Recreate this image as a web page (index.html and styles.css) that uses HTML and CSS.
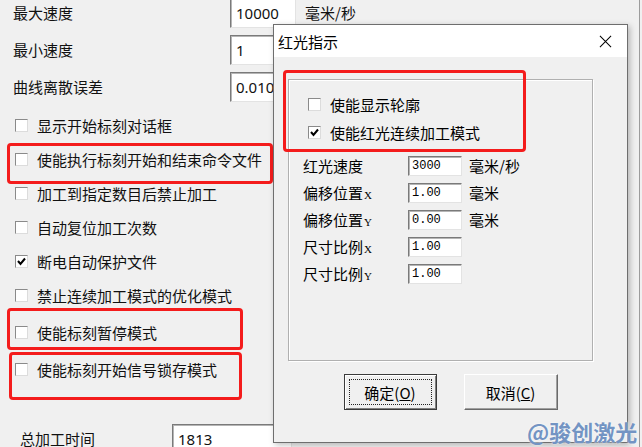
FILE: index.html
```html
<!DOCTYPE html>
<html lang="zh-CN">
<head>
<meta charset="UTF-8" />
<title>红光指示</title>
<link rel="stylesheet" href="styles.css">
</head>
<body>
<div class="screen">

  <!-- Background settings form -->
  <div class="form">
    <div class="field-row"><span class="label">最大速度</span><span class="input">10000</span><span class="unit">毫米/秒</span></div>
    <div class="field-row"><span class="label">最小速度</span><span class="input">1</span></div>
    <div class="field-row"><span class="label">曲线离散误差</span><span class="input">0.010</span></div>

    <div class="check-row spaced"><span class="box"></span><span>显示开始标刻对话框</span></div>
    <div class="check-row"><span class="box"></span><span>使能执行标刻开始和结束命令文件</span></div>
    <div class="check-row"><span class="box"></span><span>加工到指定数目后禁止加工</span></div>
    <div class="check-row"><span class="box"></span><span>自动复位加工次数</span></div>
    <div class="check-row"><span class="box checked"><svg viewBox="0 0 11 11"><polyline points="2,5 4.5,8 9,2.5" /></svg></span><span>断电自动保护文件</span></div>
    <div class="check-row"><span class="box"></span><span>禁止连续加工模式的优化模式</span></div>
    <div class="check-row spaced"><span class="box"></span><span>使能标刻暂停模式</span></div>
    <div class="check-row spaced"><span class="box"></span><span>使能标刻开始信号锁存模式</span></div>

    <div class="field-row total"><span class="label">总加工时间</span><span class="input wide">1813</span></div>
  </div>

  <!-- Red annotation boxes -->
  <div class="mark mark-a"></div>
  <div class="mark mark-b"></div>
  <div class="mark mark-c"></div>

  <!-- Dialog window -->
  <div class="dialog">
    <div class="title-bar">
      <span>红光指示</span>
      <svg class="close" viewBox="0 0 14 14"><path d="M1 1 L13 13 M13 1 L1 13" /></svg>
    </div>
    <div class="dialog-body">
      <div class="group">
        <div class="group-checks">
          <div class="dlg-check"><span class="box"></span><span>使能显示轮廓</span></div>
          <div class="dlg-check"><span class="box checked"><svg viewBox="0 0 11 11"><polyline points="2,5 4.5,8 9,2.5" /></svg></span><span>使能红光连续加工模式</span></div>
        </div>
        <div class="params">
          <div class="param"><span class="plabel">红光速度</span><span class="pinput">3000</span><span class="punit">毫米/秒</span></div>
          <div class="param"><span class="plabel">偏移位置<small>X</small></span><span class="pinput">1.00</span><span class="punit">毫米</span></div>
          <div class="param"><span class="plabel">偏移位置<small>Y</small></span><span class="pinput">0.00</span><span class="punit">毫米</span></div>
          <div class="param"><span class="plabel">尺寸比例<small>X</small></span><span class="pinput">1.00</span></div>
          <div class="param"><span class="plabel">尺寸比例<small>Y</small></span><span class="pinput">1.00</span></div>
        </div>
      </div>
      <div class="buttons">
        <button class="btn default">确定(<u>O</u>)</button>
        <button class="btn">取消(<u>C</u>)</button>
      </div>
    </div>
  </div>

  <div class="mark mark-d"></div>

  <div class="watermark">@骏创激光</div>
</div>
</body>
</html>
```

FILE: styles.css
```css
* {
  margin: 0; padding: 0; box-sizing: border-box;
}
body {
  background: #f0f0f0;
  font-family: "Noto Sans CJK SC", "Noto Sans", sans-serif;
  font-size: 15px;
  color: #111;
  overflow: hidden;
}
.screen {
  position: relative;
  width: 640px;
  height: 447px;
  border-right: 1px solid #9c9c9c;
  overflow: hidden;
}

/* Background form */
.form {
  margin-top: -6px;
}
.field-row {
  display: flex;
  align-items: center;
  height: 37px;
  padding-left: 13px;
}
.field-row .label {
  width: 217px;
}
.input {
  display: flex;
  align-items: center;
  width: 66px;
  height: 30px;
  padding-left: 5px;
  background: #fff;
  border: 1px solid;
  border-color: #7a7a7a #e3e3e3 #e3e3e3 #7a7a7a;
  box-shadow: inset 1px 1px 0 #b5b5b5;
  font-family: "Noto Sans", sans-serif;
  font-size: 15px;
}
.unit {
  margin-left: 9px;
}
.field-row.total {
  margin-top: 34px;
  padding-left: 20px;
}
.field-row.total .label {
  width: 152px;
}
.input.wide {
  width: 120px;
}

.check-row {
  display: flex;
  align-items: center;
  gap: 9px;
  height: 34px;
  padding-left: 15px;
}
.check-row.spaced {
  margin-top: 3px;
}

/* Checkbox */
.box {
  display: flex;
  align-items: center;
  justify-content: center;
  width: 13px;
  height: 13px;
  flex: none;
  background: #fff;
  border: 1px solid;
  border-color: #8a8a8a #dcdcdc #dcdcdc #8a8a8a;
}
.box svg {
  width: 11px;
  height: 11px;
}
.box polyline {
  fill: none;
  stroke: #000;
  stroke-width: 2;
}

/* Red annotations */
.mark {
  position: absolute;
  border: 3px solid #f41c1c;
  border-radius: 4px;
}
.mark-a { left: 7px; top: 143px; width: 266px; height: 41px; }
.mark-b { left: 7px; top: 308px; width: 236px; height: 42px; }
.mark-c { left: 9px; top: 352px; width: 233px; height: 48px; }
.mark-d { left: 283px; top: 70px; width: 243px; height: 82px; }

/* Dialog */
.dialog {
  position: absolute;
  left: 273px;
  top: 24px;
  width: 355px;
  height: 419px;
  background: #f0f0f0;
  border: 1px solid #6e6e6e;
  box-shadow: 2px 2px 6px rgba(0, 0, 0, 0.25);
  color: #000;
}
.title-bar {
  display: flex;
  align-items: center;
  justify-content: space-between;
  height: 32px;
  padding: 0 15px 0 4px;
  background: #fff;
}
.close {
  width: 13px;
  height: 13px;
}
.close path {
  stroke: #000;
  stroke-width: 1.1;
  fill: none;
}
.dialog-body {
  padding: 22px 0 0 14px;
}
.group {
  width: 305px;
  height: 282px;
  border: 1px solid #b0b0b0;
  box-shadow: inset 1px 1px 0 #fff, 1px 1px 0 #fff;
}
.group-checks {
  padding: 10px 0 0 19px;
}
.dlg-check {
  display: flex;
  align-items: center;
  gap: 9px;
  height: 28px;
}
.params {
  margin-top: 6px;
  padding-left: 14px;
}
.param {
  display: flex;
  align-items: center;
  height: 27px;
}
.plabel {
  width: 105px;
}
.plabel small {
  font-family: "Liberation Serif", serif;
  font-size: 11px;
  margin-left: 1px;
}
.pinput {
  display: flex;
  align-items: center;
  width: 54px;
  height: 20px;
  padding-left: 3px;
  background: #fff;
  border: 1px solid;
  border-color: #7a7a7a #e3e3e3 #e3e3e3 #7a7a7a;
  box-shadow: inset 1px 1px 0 #b5b5b5;
  font-family: "Liberation Mono", monospace;
  font-size: 12px;
}
.punit {
  margin-left: 7px;
}

.buttons {
  display: flex;
  justify-content: center;
  gap: 27px;
  margin-top: 13px;
  padding-right: 14px;
}
.btn {
  position: relative;
  width: 94px;
  height: 36px;
  background: #f0f0f0;
  font-family: "Noto Sans CJK SC", sans-serif;
  font-size: 15px;
  color: #000;
  border: 1px solid;
  border-color: #fff #6a6a6a #6a6a6a #fff;
  box-shadow: inset -1px -1px 0 #a0a0a0;
}
.btn.default {
  width: 93px;
  border: 1px solid #3a3a3a;
  box-shadow: inset 1px 1px 0 #fff, inset -1px -1px 0 #808080;
}
.btn.default::after {
  content: "";
  position: absolute;
  inset: 4px;
  border: 1px dotted #222;
}

/* Watermark */
.watermark {
  position: absolute;
  left: 527px;
  top: 415px;
  font-size: 22px;
  font-weight: 700;
  color: #7394c3;
  letter-spacing: 0;
  text-shadow: 0 0 2px #fff;
}
```
